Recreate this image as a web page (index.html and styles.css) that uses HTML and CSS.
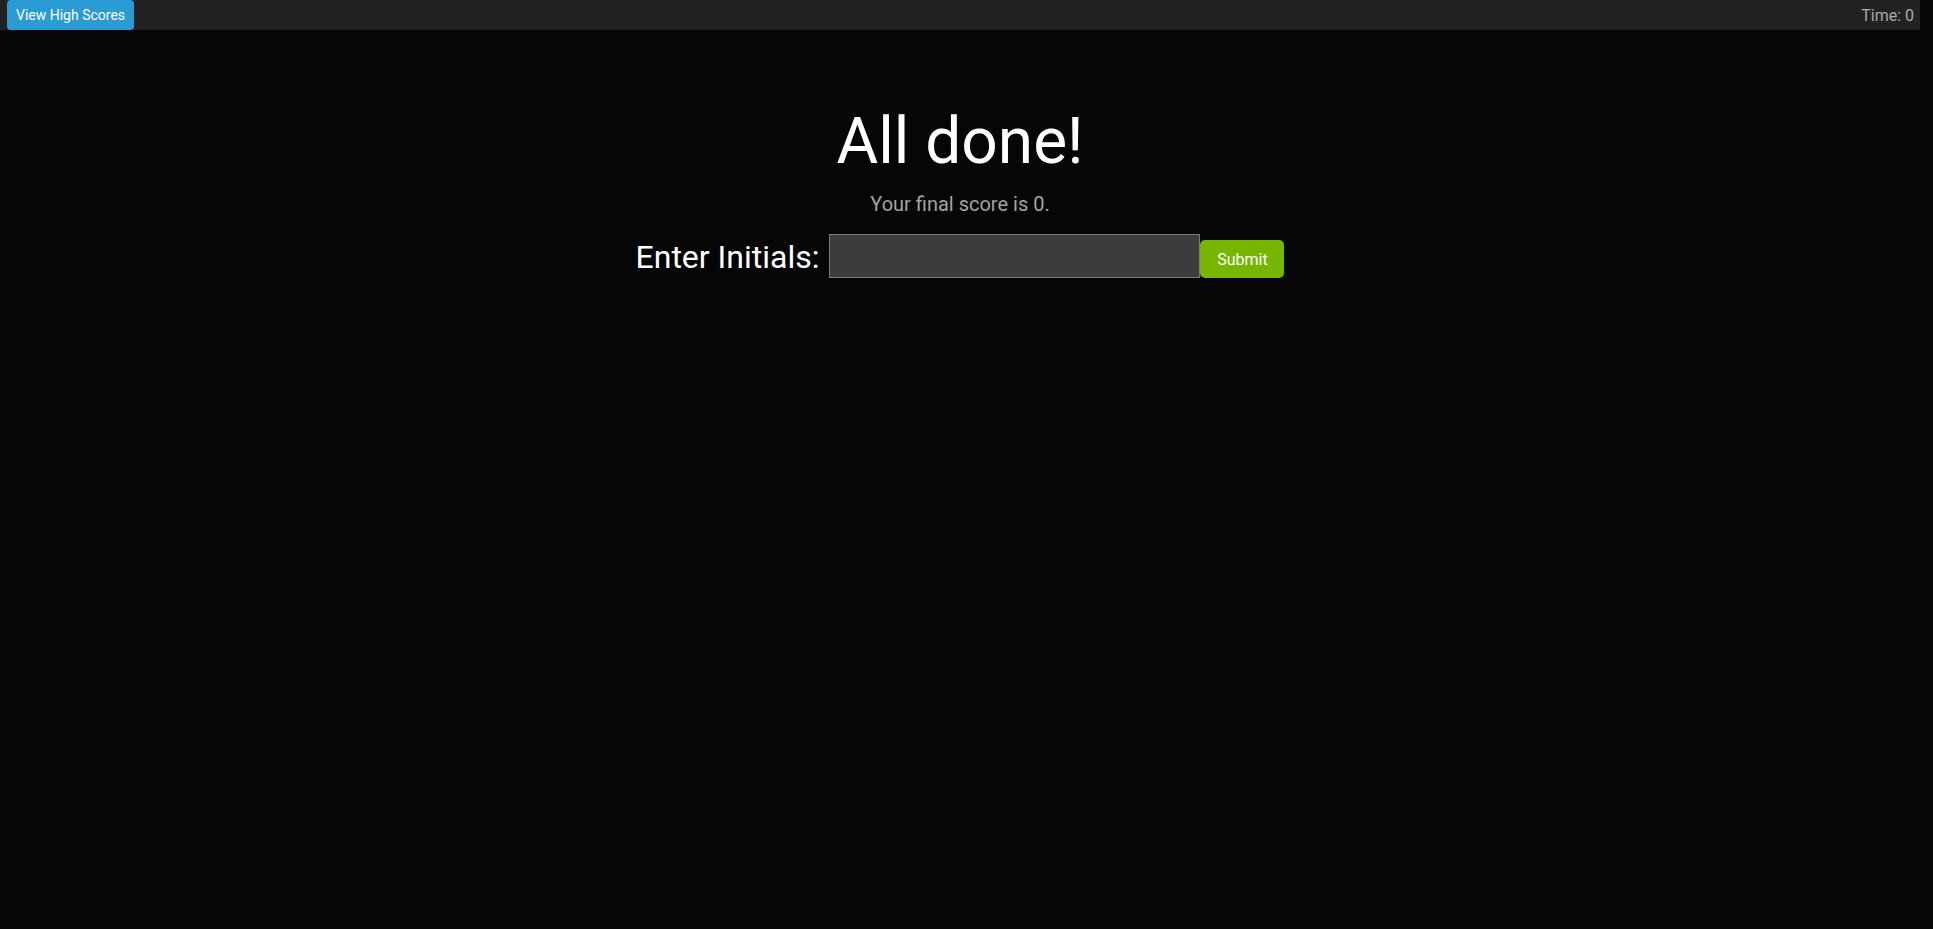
FILE: index.html
```html
<!DOCTYPE html>
<html lang="en">
<head>
<meta charset="utf-8">
<title>Quiz</title>
<link rel="stylesheet" href="styles.css">
</head>
<body>
<div class="page">
  <header class="topbar">
    <button class="btn-scores" type="button">View High Scores</button>
    <div class="timer">Time: 0</div>
  </header>
  <main class="done">
    <h1 class="title">All done!</h1>
    <p class="score">Your final score is 0.</p>
    <form class="entry">
      <label class="entry-label" for="initials">Enter Initials:</label>
      <input class="entry-input" id="initials" type="text">
      <button class="btn-submit" type="button">Submit</button>
    </form>
  </main>
</div>
</body>
</html>
```
FILE: styles.css
```css
html, body {
  margin: 0;
  padding: 0;
  background: #060606;
  font-family: Roboto, "Liberation Sans", Arial, sans-serif;
  min-height: 100%;
}
.page {
  width: 1920px;
}
.topbar {
  display: flex;
  justify-content: space-between;
  align-items: center;
  height: 30px;
  background: #222222;
  padding: 0 6px 0 7px;
}
.btn-scores {
  height: 30px;
  width: 127px;
  padding: 0;
  border: none;
  border-radius: 4px;
  background: #2a9bd5;
  color: #ffffff;
  font-family: Roboto, "Liberation Sans", Arial, sans-serif;
  font-size: 14px;
  line-height: 30px;
}
.timer {
  color: #aaaaaa;
  font-size: 16px;
}
.done {
  display: flex;
  flex-direction: column;
  align-items: center;
  padding-top: 74px;
}
.title {
  margin: 0;
  font-size: 64px;
  font-weight: 400;
  color: #ffffff;
  line-height: normal;
}
.score {
  margin: 13px 0 0;
  font-size: 20px;
  color: #a3a3a3;
  line-height: normal;
}
.entry {
  display: flex;
  align-items: flex-end;
  margin-top: 18px;
}
.entry-label {
  font-size: 32px;
  color: #ffffff;
  margin-right: 10px;
  margin-bottom: 2px;
  line-height: normal;
}
.entry-input {
  box-sizing: border-box;
  width: 371px;
  height: 44px;
  background: #3c3c3c;
  border: 1px solid #7a7a7a;
  color: #ffffff;
  font-size: 18px;
  margin: 0;
  padding: 0 8px;
}
.btn-submit {
  box-sizing: border-box;
  width: 84px;
  height: 38px;
  border: none;
  border-radius: 5px;
  background: #76b500;
  color: #ffffff;
  font-family: Roboto, "Liberation Sans", Arial, sans-serif;
  font-size: 16px;
  padding: 0;
  margin: 0;
}
```
